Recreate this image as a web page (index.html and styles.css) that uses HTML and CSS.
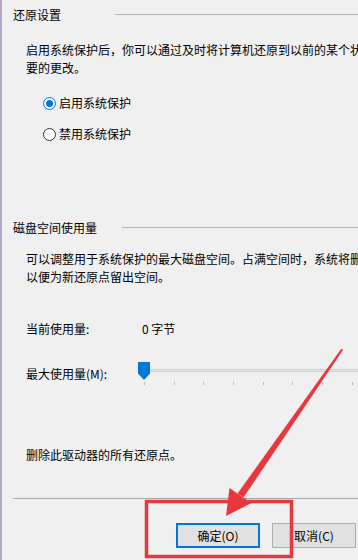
FILE: index.html
```html
<!DOCTYPE html>
<html lang="zh-CN">

<head>
    <meta charset="UTF-8">
    <meta name="viewport" content="width=device-width, initial-scale=1.0">
    <title>系统保护</title>
    <link rel="stylesheet" href="styles.css">
</head>

<body>
    <div class="dialog">
        <div class="legend">
            <span>还原设置</span>
            <div class="legend-line line-restore"></div>
        </div>
        <p class="desc">启用系统保护后，你可以通过及时将计算机还原到以前的某个状态来撤消不需要的更改。<br>要的更改。</p>

        <div class="radio-row first">
            <span class="radio checked"></span>
            <span>启用系统保护</span>
        </div>
        <div class="radio-row second">
            <span class="radio"></span>
            <span>禁用系统保护</span>
        </div>

        <div class="legend legend-disk">
            <span>磁盘空间使用量</span>
            <div class="legend-line line-disk"></div>
        </div>
        <p class="desc desc-disk">可以调整用于系统保护的最大磁盘空间。占满空间时，系统将删除较旧的还原点，<br>以便为新还原点留出空间。</p>

        <div class="field current">
            <span class="field-label">当前使用量:</span>
            <span class="field-value">0 字节</span>
        </div>
        <div class="field max">
            <span class="field-label">最大使用量(M):</span>
            <div class="slider">
                <div class="track"></div>
                <div class="ticks"></div>
                <svg class="thumb" width="12" height="18" viewBox="0 0 12 18">
                    <path d="M0 0 H12 V11.5 L6 18 L0 11.5 Z" fill="#0078d7" />
                </svg>
            </div>
        </div>

        <p class="delete">删除此驱动器的所有还原点。</p>

        <div class="separator"></div>

        <div class="footer">
            <div class="btn btn-default">确定(O)</div>
            <div class="btn">取消(C)</div>
        </div>
    </div>

    <!-- 标注：红框 + 箭头 -->
    <svg class="mark" width="358" height="560" viewBox="0 0 358 560">
        <rect x="146.5" y="501.5" width="145" height="55" fill="none" stroke="#e8383d" stroke-width="3.5" />
        <polygon points="341.5,348.5 343,350 243.5,497.5 237.5,493.5" fill="#e8383d" />
        <polygon points="226,516 229.5,488 236,492.5 243,497.5 251.5,503" fill="#e8383d" />
    </svg>
</body>

</html>
```

FILE: styles.css
```css
* {
    margin: 0;
    padding: 0;
    box-sizing: border-box;
}

body {
    width: 358px;
    height: 560px;
    overflow: hidden;
    position: relative;
    background-color: #f0f0f0;
    border-left: 2px solid #b2a6c6;
    font-family: "Noto Sans CJK SC", "Microsoft YaHei", sans-serif;
    font-size: 12px;
    line-height: 18px;
    color: #000;
}

.dialog {
    padding: 6px 0 0 11px;
    white-space: nowrap;
}

.legend {
    display: flex;
    align-items: center;
}

.legend-line {
    flex: 1;
    height: 1px;
    background-color: #b4b4b4;
}

.line-restore {
    margin-left: 54px;
    margin-top: -2px;
}

.line-disk {
    margin-left: 25px;
    margin-top: -2px;
}

.legend-disk {
    margin-top: 76px;
}

.desc {
    margin: 17px 0 0 13px;
    overflow: hidden;
}

.desc-disk {
    margin-top: 13px;
}

.radio-row {
    display: flex;
    align-items: center;
    padding-left: 30px;
}

.radio-row.first {
    margin-top: 17px;
}

.radio-row.second {
    margin-top: 13px;
}

.radio {
    width: 13px;
    height: 13px;
    border-radius: 50%;
    border: 1px solid #333;
    background-color: #fff;
    margin-right: 3px;
    position: relative;
}

.radio.checked {
    border-color: #0078d7;
}

.radio.checked::after {
    content: "";
    position: absolute;
    left: 2px;
    top: 2px;
    width: 7px;
    height: 7px;
    border-radius: 50%;
    background-color: #0078d7;
}

.field {
    display: flex;
    align-items: flex-start;
    margin-left: 13px;
}

.field.current {
    margin-top: 34px;
}

.field.max {
    margin-top: 27px;
}

.field-label {
    width: 112px;
}

.field-value {
    padding-left: 4px;
}

.slider {
    flex: 1;
    height: 24px;
    margin-top: -3px;
    position: relative;
}

.track {
    position: absolute;
    left: 6px;
    right: 0;
    top: 7px;
    height: 3px;
    border-top: 1px solid #d0d0d0;
    border-bottom: 1px solid #d0d0d0;
    background-color: #e6e6e6;
}

.ticks {
    position: absolute;
    left: 6px;
    right: 0;
    top: 20px;
    height: 3px;
    background: repeating-linear-gradient(to right, #bdbdbd 0, #bdbdbd 1px, transparent 1px, transparent 29.7px);
}

.thumb {
    position: absolute;
    left: 0;
    top: 0;
}

.delete {
    margin: 60px 0 0 13px;
}

.separator {
    margin-top: 34px;
    height: 1px;
    background-color: #a9a9a9;
}

.footer {
    display: flex;
    gap: 12px;
    margin: 24px 0 0 163px;
}

.btn {
    width: 84px;
    height: 25px;
    line-height: 23px;
    text-align: center;
    border: 1px solid #adadad;
    background-color: #e1e1e1;
    flex-shrink: 0;
}

.btn-default {
    border: 2px solid #0078d7;
    line-height: 21px;
    background-color: #e1e1e1;
}

.mark {
    position: absolute;
    left: -2px;
    top: 0;
    pointer-events: none;
}
```
